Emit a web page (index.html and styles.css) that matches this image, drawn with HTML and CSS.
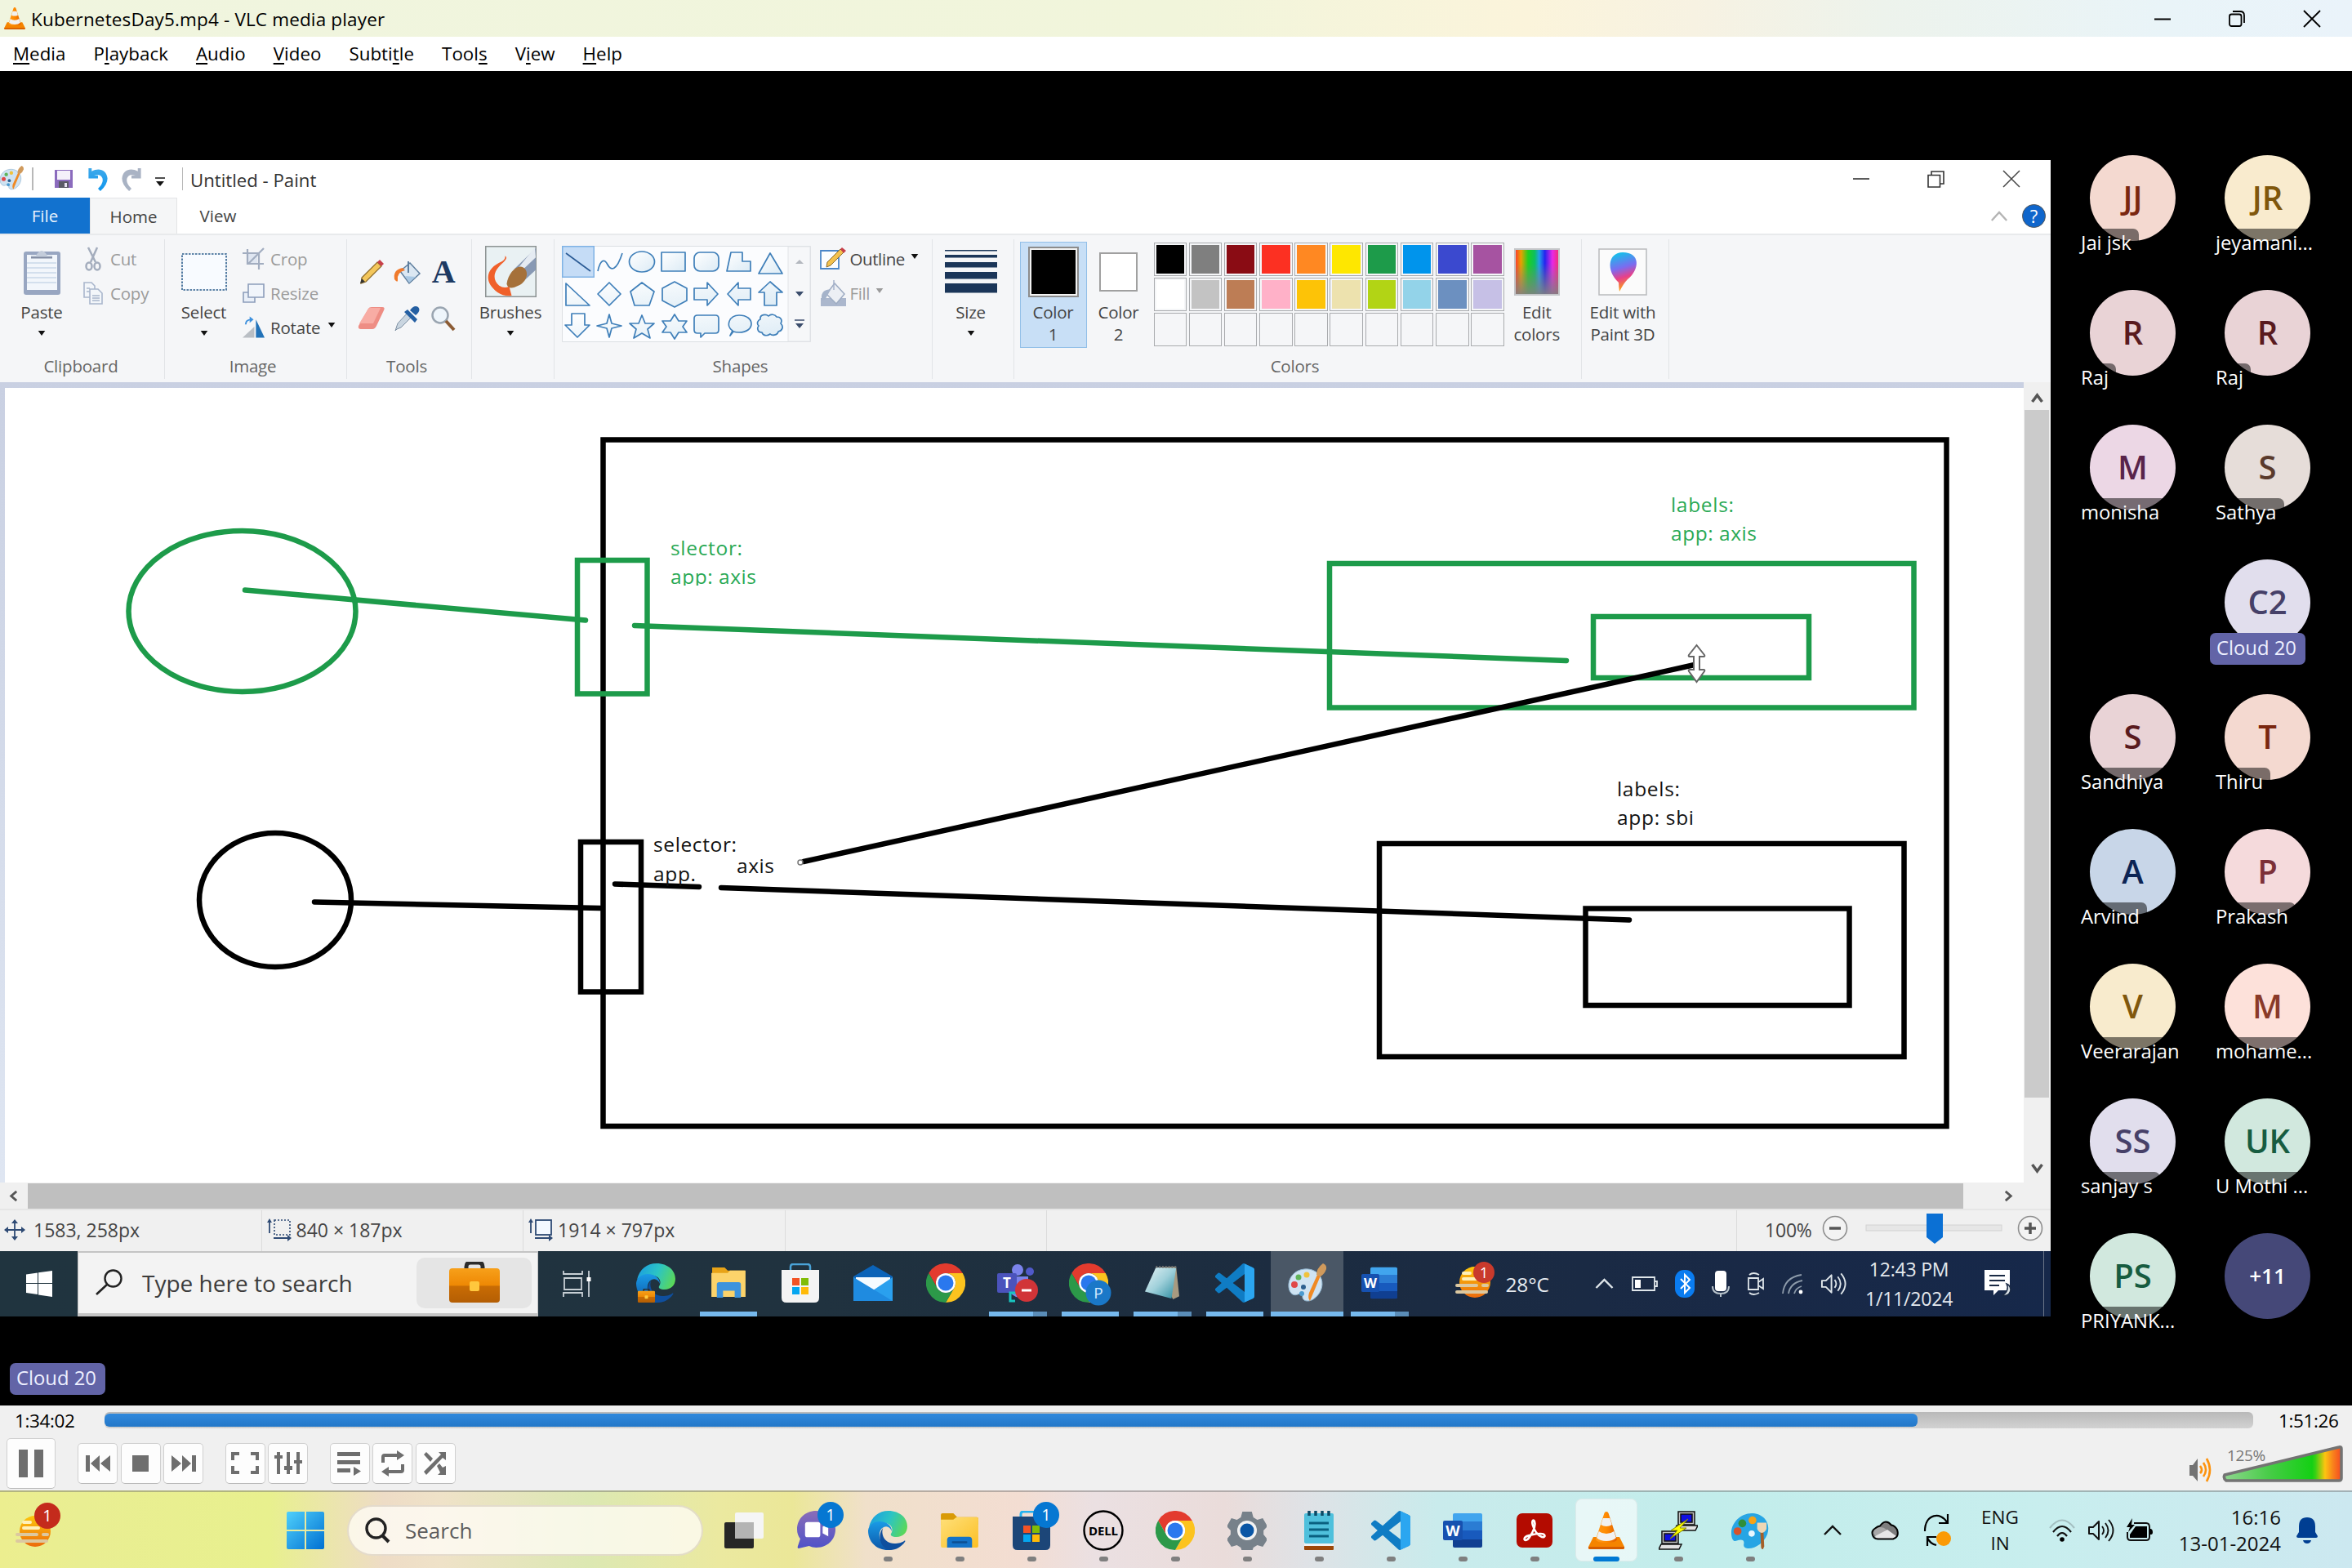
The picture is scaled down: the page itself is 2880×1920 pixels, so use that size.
FILE: index.html
```html
<!DOCTYPE html>
<html lang="en">
<head>
<meta charset="utf-8">
<title>KubernetesDay5.mp4 - VLC media player</title>
<link rel="stylesheet" href="styles.css">
</head>
<body>
<svg class="defs" width="0" height="0" aria-hidden="true">
<defs>
<linearGradient id="gPane" x1="0" y1="0" x2="1" y2="1"><stop offset="0" stop-color="#4fd0fb"/><stop offset="1" stop-color="#0070d2"/></linearGradient>
<linearGradient id="gEdgeA" x1="0" y1="0.3" x2="1" y2="0.6"><stop offset="0" stop-color="#1b9fe0"/><stop offset=".5" stop-color="#2cc4c4"/><stop offset="1" stop-color="#5bd858"/></linearGradient>
<linearGradient id="gEdgeB" x1="0" y1="0" x2="0" y2="1"><stop offset="0" stop-color="#1a9be6"/><stop offset="1" stop-color="#0c56a8"/></linearGradient>
<linearGradient id="gCone" x1="0" y1="0" x2="1" y2="0"><stop offset="0" stop-color="#ff9a1c"/><stop offset=".5" stop-color="#ff8a00"/><stop offset="1" stop-color="#e05e00"/></linearGradient>
<linearGradient id="gFolder" x1="0" y1="0" x2="1" y2="1"><stop offset="0" stop-color="#ffe07a"/><stop offset="1" stop-color="#fbbf24"/></linearGradient>
<linearGradient id="gShape" x1="0" y1="0" x2="1" y2="1"><stop offset="0" stop-color="#ffffff"/><stop offset="1" stop-color="#dcebf5"/></linearGradient>
<linearGradient id="gSun" x1="0" y1="0" x2="0" y2="1"><stop offset="0" stop-color="#fdc70c"/><stop offset="1" stop-color="#ec6a0c"/></linearGradient>
<linearGradient id="gChat" x1="0" y1="0" x2="0" y2="1"><stop offset="0" stop-color="#8a6db8"/><stop offset="1" stop-color="#4f52c8"/></linearGradient>
<linearGradient id="gCase" x1="0" y1="0" x2="0" y2="1"><stop offset="0" stop-color="#f7a01a"/><stop offset=".5" stop-color="#ee8804"/><stop offset=".52" stop-color="#c96c04"/><stop offset="1" stop-color="#b45e04"/></linearGradient>
<linearGradient id="gRain" x1="0" y1="0" x2="1" y2="0"><stop offset="0" stop-color="#f33"/><stop offset=".14" stop-color="#e8a000"/><stop offset=".3" stop-color="#1fd01f"/><stop offset=".45" stop-color="#0cbf60"/><stop offset=".55" stop-color="#22a0e8"/><stop offset=".68" stop-color="#2424ee"/><stop offset=".85" stop-color="#e828e8"/><stop offset="1" stop-color="#f2306c"/></linearGradient>
<linearGradient id="gFade" x1="0" y1="0" x2="0" y2="1"><stop offset="0" stop-color="#808080" stop-opacity="0"/><stop offset=".3" stop-color="#808080" stop-opacity="0"/><stop offset="1" stop-color="#808080" stop-opacity=".9"/></linearGradient>
<linearGradient id="g3d" x1=".3" y1="0" x2=".5" y2="1"><stop offset="0" stop-color="#10c4ea"/><stop offset=".4" stop-color="#7a6cf0"/><stop offset=".65" stop-color="#e8408a"/><stop offset="1" stop-color="#ffb400"/></linearGradient>
<linearGradient id="gVol" x1="0" y1="0" x2="1" y2="0"><stop offset="0" stop-color="#8fd68f"/><stop offset=".4" stop-color="#45cc45"/><stop offset=".75" stop-color="#14d014"/><stop offset=".78" stop-color="#3ad014"/><stop offset=".86" stop-color="#fdc510"/><stop offset=".93" stop-color="#f9801c"/><stop offset="1" stop-color="#f54a20"/></linearGradient>
<linearGradient id="gNote" x1="0" y1="0" x2="1" y2="1"><stop offset="0" stop-color="#e6f3f5"/><stop offset=".5" stop-color="#9fd0da"/><stop offset="1" stop-color="#2c8ca0"/></linearGradient>
<linearGradient id="gUndo" x1="0" y1="0" x2="0" y2="1"><stop offset="0" stop-color="#3fa9ea"/><stop offset="1" stop-color="#0f96ee"/></linearGradient>

<symbol id="cone" viewBox="0 0 48 48"><path d="M8 32h32l6 12q.6 3-2 3H4q-2.600 0-2-3z" fill="#f58400"/><path d="M2 44q-.5 3 2 3h40q2.500 0 2-3z" fill="#d65d00"/><path d="M24 1q2 0 2.600 2L37 35q-1 4-13 4t-13-4L21.400 3Q22 1 24 1z" fill="url(#gCone)"/><path d="M19.800 9h8.400l2.600 8q-3 2-6.800 2t-6.800-2zM14.700 25q4 3 9.300 3t9.300-3l2.600 8q-4 4-11.900 4t-11.900-4z" fill="#f1f1f1"/></symbol>
<symbol id="win11" viewBox="0 0 46 46"><path d="M2 0h20v22H0V2q0-2 2-2zM24 0h20q2 0 2 2v20H24zM0 24h22v22H2q-2 0-2-2zM24 24h22v20q0 2-2 2H24z" fill="url(#gPane)"/></symbol>
<symbol id="win10" viewBox="0 0 32 32"><path d="M0 4.500l14-2V15H0zM15 2.300L32 0v15H15zM0 16h14v13L0 27zM15 16h17v16l-17-2.400z" fill="#fff"/></symbol>
<symbol id="chrome" viewBox="0 0 48 48"><path d="M3.200 12A24 24 0 0 1 44.800 12H24A12 12 0 0 0 13.600 30z" fill="#e33b2e"/><path d="M44.800 12A24 24 0 0 1 24 48L34.400 30A12 12 0 0 0 24 12z" fill="#fcc31e"/><path d="M24 48A24 24 0 0 1 3.200 12L13.600 30A12 12 0 0 0 34.400 30z" fill="#2c9949"/><circle cx="24" cy="24" r="12" fill="#fff"/><circle cx="24" cy="24" r="9.500" fill="#2a78ee"/></symbol>
<symbol id="edge" viewBox="0 0 48 48"><path d="M1 20C4 7 13 0 25 0c14 0 23 9 23 19 0 8-6 13-13 13-6 0-8-2-7-4 3-4 2-11-6-13-9-2-17 1-21 5z" fill="url(#gEdgeA)"/><path d="M0 24C1 17 7 13 14 13c9 0 15 5 15 12-2-5-6-7-10-5-6 3-7 12-2 19 3 5 8 8 13 9C13 50 0 40 0 24z" fill="url(#gEdgeB)"/><path d="M19 20c-4 5-1 20 13 20 6 0 9-1 12-3 1-1 2 0 1 1-4 6-11 10-18 10-12-2-17-18-8-28z" fill="#0f4f9e"/></symbol>
<symbol id="vscode" viewBox="0 0 24 24"><path d="M23.150 2.587L18.210.21a1.494 1.494 0 0 0-1.705.29l-9.460 8.630-4.120-3.128a.999.999 0 0 0-1.276.057L.327 7.261A1 1 0 0 0 .326 8.740L3.899 12 .326 15.260a1 1 0 0 0 .001 1.479L1.650 17.940a.999.999 0 0 0 1.276.057l4.120-3.128 9.460 8.630a1.492 1.492 0 0 0 1.704.29l4.942-2.377A1.500 1.500 0 0 0 24 20.060V3.939a1.500 1.500 0 0 0-.85-1.352zm-5.146 14.861L10.826 12l7.178-5.448v10.896z" fill="#0f7cc4"/><path d="M18 .2l5.200 2.400q.8.500.8 1.400v16q0 1-.8 1.500L18 23.800z" fill="#2ba6f0"/></symbol>
<symbol id="word" viewBox="0 0 48 48"><path d="M14 3h32q2 0 2 2v8H12V5q0-2 2-2z" fill="#41a5ee"/><path d="M12 13h36v11H12z" fill="#2b7cd3"/><path d="M12 24h36v11H12z" fill="#185abd"/><path d="M12 35h36v8q0 2-2 2H14q-2 0-2-2z" fill="#103f91"/><rect x="0" y="12" width="24" height="24" rx="2" fill="#1651b0"/><text x="12" y="30.500" text-anchor="middle" font-size="18" font-weight="700" fill="#fff">W</text></symbol>
<symbol id="folder" viewBox="0 0 48 44"><path d="M2 0h14l5 5h25q2 0 2 2v8H0V2q0-2 2-2z" fill="#d99a06"/><path d="M20 5h26q2 0 2 2v35q0 2-2 2H2q-2 0-2-2V8h16z" fill="url(#gFolder)"/><path d="M12 30h24q4 0 4 4v10H8V34q0-4 4-4z" fill="#1473c8"/><rect x="14" y="36" width="20" height="2.500" rx="1.200" fill="#0b4f92"/></symbol>
<symbol id="folder10" viewBox="0 0 44 40"><path d="M1 0h16l4 4H43V14H1z" fill="#e8a317"/><path d="M1 7h20l3-3h20v34H0V7z" fill="#fcd36a"/><path d="M7 22q0-3 3-3h25q3 0 3 3v17H30V30H15v9H7z" fill="#3d93dd"/></symbol>
<symbol id="store" viewBox="0 0 46 48"><path d="M10 9V4q0-3 3-3h18q3 0 3 3v5" fill="none" stroke="#25b1f0" stroke-width="3"/><path d="M0 7h46v35q0 6-6 6H6q-6 0-6-6z" fill="#1c4678"/><g><path d="M13 18h9v9h-9z" fill="#f35325"/><path d="M24 18h9v9h-9z" fill="#81bc06"/><path d="M13 29h9v9h-9z" fill="#05a6f0"/><path d="M24 29h9v9h-9z" fill="#ffba08"/></g></symbol>
<symbol id="store10" viewBox="0 0 46 48"><path d="M11 9V4q0-3 3-3h18q3 0 3 3v5" fill="none" stroke="#4aa3d8" stroke-width="2.500"/><path d="M0 8h46v34q0 6-6 6H6q-6 0-6-6z" fill="#f4f4f4"/><path d="M13 18h9v9h-9z" fill="#f35325"/><path d="M24 18h9v9h-9z" fill="#81bc06"/><path d="M13 29h9v9h-9z" fill="#05a6f0"/><path d="M24 29h9v9h-9z" fill="#ffba08"/></symbol>
<symbol id="mail" viewBox="0 0 48 44"><path d="M0 14L24 0l24 14v8H0z" fill="#0b63b8"/><path d="M3 15h42v12L24 36 3 27z" fill="#f5fbff"/><path d="M0 15l24 16L48 15v29H0z" fill="#2aa0ee"/><path d="M0 15l48 29H0z" fill="#1f8be0"/></symbol>
<symbol id="palette" viewBox="0 0 48 48"><path d="M20 7C8 8 0 18 1 29c1 9 7 11 11 9 4-2 6 0 6 4 1 5 8 5 13 2 9-6 13-16 10-25C38 11 30 6 20 7z" fill="#cfe3f2" stroke="#8fb4cf"/><circle cx="8" cy="26" r="4" fill="#e04848"/><circle cx="13" cy="17" r="3.500" fill="#5fb45a"/><circle cx="23" cy="14" r="3.500" fill="#f0c23c"/><circle cx="19" cy="29" r="3" fill="#2c5f8f"/><circle cx="17" cy="37" r="3" fill="#4a9ad0"/><path d="M36 14l4 1-13 31q-3-4-1-10z" fill="#f08a24"/><path d="M35 14q0-8 8-14 5 2 4 7-2 6-7 9z" fill="#d09a5c"/></symbol>
<symbol id="paint11" viewBox="0 0 48 48"><path d="M26 2C12 2 0 14 0 27c0 8 3 12 7 10 6-2 10-1 9 4-1 4 2 6 6 6 10 0 20-8 24-18C51 13 40 2 26 2z" fill="#27a5e4"/><circle cx="8" cy="25" r="5" fill="#d8512b"/><circle cx="14" cy="15" r="5" fill="#2f8f3a"/><circle cx="27" cy="11" r="5" fill="#f5a318"/><circle cx="26" cy="28" r="4" fill="#e8f7ff"/><path d="M37 24h4l1 20q-2 7-4 2z" fill="#a4602a"/><path d="M33 14h12v8q-2 5-6 5t-6-5z" fill="#eed6b4"/></symbol>
<symbol id="teams" viewBox="0 0 50 48"><circle cx="25" cy="8" r="7" fill="#7b83eb"/><circle cx="40" cy="10" r="5" fill="#5059c9"/><path d="M14 16h24v20q-10 10-20 2z" fill="#7b83eb"/><rect x="0" y="12" width="24" height="24" rx="2" fill="#4b53bc"/><text x="12" y="30" text-anchor="middle" font-size="17" font-weight="700" fill="#fff">T</text><path d="M26 36H16v10h6" stroke="#19c5c0" stroke-width="3" fill="none"/><circle cx="36" cy="33" r="14" fill="#d13438"/><rect x="30" y="31.500" width="12" height="3" fill="#fff"/></symbol>
<symbol id="notepad10" viewBox="0 0 44 44"><path d="M14 2l26-1 4 38-8 4z" fill="#a89a80"/><path d="M14 2l26 1-6 39L0 33z" fill="url(#gNote)"/><path d="M14 1h26" stroke="#6b6b6b" stroke-width="3" stroke-dasharray="2 2"/></symbol>
<symbol id="case" viewBox="0 0 62 50"><path d="M21 10V6q0-5 5-5h10q5 0 5 5v4" fill="none" stroke="#2c2c2c" stroke-width="5"/><rect y="8" width="62" height="42" rx="4" fill="url(#gCase)"/><rect x="25" y="24" width="12" height="12" rx="2" fill="#ffc83d"/></symbol>
<symbol id="weather" viewBox="0 0 44 42"><circle cx="24" cy="22" r="19" fill="url(#gSun)"/><g stroke="#fff0b8" stroke-width="4" stroke-linecap="round"><path d="M10 11h8M10 18h18"/><path stroke="#dcc8a0" d="M2 26h24M34 26h5M2 34h36"/></g></symbol>
<symbol id="chat" viewBox="0 0 48 48"><path d="M24 0c14 0 24 10 24 23S38 46 24 46q-5 0-9-2L2 47q-2 0-1-3l3-9Q0 30 0 23C0 10 10 0 24 0z" fill="url(#gChat)"/><rect x="10" y="14" width="19" height="19" rx="3" fill="#fff"/><path d="M32 20l7-5v17l-7-4z" fill="#fff"/></symbol>
<symbol id="gear" viewBox="0 0 48 48"><path d="M18 1h12l2 7 5 3 7-2 6 10-5 5v5l5 6-6 9-7-2-5 3-2 6H18l-2-6-5-3-7 2-6-9 5-6v-5l-5-5L4 9l7 2 5-3z" transform="translate(1 0) scale(.96 1)" fill="#77818a"/><circle cx="24" cy="24" r="12" fill="#f2f2f2"/><circle cx="24" cy="24" r="8.500" fill="#0a56a5"/></symbol>
<symbol id="notes11" viewBox="0 0 36 48"><rect y="42" width="36" height="6" rx="1" fill="#9c4708"/><rect y="38" width="36" height="5" fill="#f2f2f2"/><rect y="3" width="36" height="37" rx="2" fill="#4fc0dc"/><path d="M6 0v6M14 0v6M22 0v6M30 0v6" stroke="#0b4a66" stroke-width="3.500"/><path d="M6 15h24M6 23h24M6 31h24" stroke="#0a6080" stroke-width="3"/></symbol>
<symbol id="acrobat" viewBox="0 0 44 42"><rect width="44" height="42" rx="7" fill="#b30b00"/><path d="M10 30c-2 4 3 4 6-1 4-6 8-14 6-19-1-3-4-1-2 5 2 7 6 12 11 14 5 1 5-4-2-4-6 0-17 2-19 5z" fill="none" stroke="#fff" stroke-width="2.600"/></symbol>
<symbol id="putty" viewBox="0 0 48 48"><g stroke="#111" stroke-width="1.500"><path d="M24 1h20v16H24z" fill="#c4c4c4"/><path d="M27 4h14v10H27z" fill="#1010e0"/><path d="M22 18h26l-3 6H20z" fill="#e2e2e2"/><path d="M4 25h20v15H4z" fill="#c4c4c4"/><path d="M7 28h14v9H7z" fill="#1010e0"/><path d="M3 41h25l-3 6H0z" fill="#e2e2e2"/></g><path d="M36 10L15 24h8l-9 10 20-13h-8z" fill="#ff0" stroke="#8a8a00"/></symbol>
<symbol id="tview" viewBox="0 0 48 44"><rect x="0" y="12" width="36" height="32" rx="2" fill="#262626"/><rect x="13" y="0" width="35" height="32" rx="2" fill="#f5f5f5"/><rect x="13" y="12" width="23" height="20" fill="#b4b4b4"/></symbol>
<symbol id="lens" viewBox="0 0 32 32"><circle cx="14.500" cy="13.500" r="11.500" fill="none" stroke="currentColor" stroke-width="3.400"/><path d="M22 22l8 8" stroke="currentColor" stroke-width="4"/></symbol>
<symbol id="volume" viewBox="0 0 34 28"><path d="M2 10h5l7-7v22l-7-7H2z" fill="none" stroke="currentColor" stroke-width="2" stroke-linejoin="round"/><path d="M18 9q4 5 0 10M22 5q7 9 0 18M26 1q11 13 0 26" fill="none" stroke="currentColor" stroke-width="1.900"/></symbol>
<symbol id="caret" viewBox="0 0 10 7"><path d="M0 0h10L5 7z" fill="currentColor"/></symbol>
<symbol id="chevUp" viewBox="0 0 24 14"><path d="M2 12L12 2l10 10" fill="none" stroke="currentColor" stroke-width="2.400"/></symbol>
<symbol id="brush" viewBox="0 0 62 62"><rect x=".75" y=".75" width="60.500" height="60.500" fill="#e9f1f3" stroke="#8e9494" stroke-width="1.500"/><path d="M61 3v26L47 42 35 28z" fill="#8899b4"/><path d="M60 2L38 29l4 3L61 14z" fill="#e5ebf2"/><path d="M26 46c2-13 12-24 20-20 8 5 4 18-6 22-6 3-12 5-14-2z" fill="#a5713a"/><path d="M24 12q4 2-2 8C10 30 8 40 17 48q6 4 12 1l3 11q-10 1-17-4C-4 42 3 26 20 19q5-3 4-7z" fill="#f0602a"/></symbol>
</defs>
</svg>

<header class="titlebar">
  <svg class="cone-sm"><use href="#cone"/></svg>
  <span class="window-title">KubernetesDay5.mp4 - VLC media player</span>
  <div class="caption">
    <svg width="20" height="20" viewBox="0 0 20 20"><path d="M0 10.500h20" stroke="#000" stroke-width="2"/></svg>
    <svg width="20" height="20" viewBox="0 0 20 20"><rect x="1" y="4.500" width="14.500" height="14.500" rx="2.500" fill="none" stroke="#000" stroke-width="1.800"/><path d="M5 1h9q5 0 5 5v9" fill="none" stroke="#000" stroke-width="1.800"/></svg>
    <svg width="22" height="22" viewBox="0 0 22 22"><path d="M1 1l20 20M21 1L1 21" stroke="#000" stroke-width="1.800"/></svg>
  </div>
</header>
<nav class="menubar">
  <span><u>M</u>edia</span><span>P<u>l</u>ayback</span><span><u>A</u>udio</span><span><u>V</u>ideo</span><span>Subti<u>t</u>le</span><span>Tool<u>s</u></span><span>V<u>i</u>ew</span><span><u>H</u>elp</span>
</nav>

<main class="stage">
<div class="shared">
<section class="paint">
  <div class="p-title">
    <svg class="p-logo"><use href="#palette"/></svg>
    <i class="vr"></i>
    <svg class="p-save" viewBox="0 0 22 22"><path d="M0 0h22v22H0z" fill="#8b6bbd"/><path d="M3 1h16v11H3z" fill="#f4f1fa"/><path d="M5 14h12v8H5z" fill="#5a5a66"/><path d="M12 16h3v5h-3z" fill="#e6e0f0"/></svg>
    <svg class="p-undo" viewBox="0 0 26 30"><path d="M1 1v13h12V10H8q10-3 11 6 0 5-6 11l3 3q9-8 9-16C24 3 14 0 5 5V1z" fill="url(#gUndo)"/></svg>
    <svg class="p-redo" viewBox="0 0 26 30"><path d="M25 1v13H13V10h5q-10-3-11 6 0 5 6 11l-3 3q-9-8-9-16C2 3 12 0 21 5V1z" fill="#a9b3c4"/></svg>
    <svg class="p-drop" viewBox="0 0 12 12"><path d="M0 1h12" stroke="#222" stroke-width="1.600"/><path d="M1 5h10l-5 6z" fill="#111"/></svg>
    <i class="vr vr2"></i>
    <span class="p-name">Untitled - Paint</span>
    <div class="p-caption">
      <svg width="20" height="22" viewBox="0 0 20 22"><path d="M0 11h20" stroke="#333" stroke-width="1.600"/></svg>
      <svg width="21" height="21" viewBox="0 0 21 21"><path d="M1 5.500h14.500V20H1zM5 5V1h15v15h-4" fill="none" stroke="#333" stroke-width="1.600"/></svg>
      <svg width="22" height="22" viewBox="0 0 22 22"><path d="M1 1l20 20M21 1L1 21" stroke="#444" stroke-width="1.500"/></svg>
    </div>
  </div>
  <div class="p-tabs">
    <span class="tab file">File</span><span class="tab home">Home</span><span class="tab view">View</span>
    <svg class="p-collapse" viewBox="0 0 24 14"><path d="M2 13L12 2l10 11" fill="none" stroke="#b4b4b4" stroke-width="2.600"/></svg>
    <b class="help">?</b>
  </div>
  <div class="ribbon">
    <div class="group g-clip">
      <div class="gbody">
        <div class="big"><span class="pic"><svg width="46" height="56" viewBox="0 0 46 56"><rect x="1" y="3" width="45" height="53" rx="3" fill="#98a6c1"/><rect x="5" y="7" width="37" height="43" fill="#f2f6fb"/><path d="M5 17h36M5 23h36M5 29h36M5 35h36M5 41h36" stroke="#c9d7e9" stroke-width="1.500"/><path d="M10 10.500V8h6l2-3q5-6 10 0l2 3h6v2.500z" fill="#c3ccda"/><path d="M10 10.500h26" stroke="#7f8aa0" stroke-width="2"/></svg></span><span>Paste</span><svg class="caret"><use href="#caret"/></svg></div>
        <div class="rows off"><div><svg width="24" height="30" viewBox="0 0 24 30"><path d="M6 1l9 18M17 1L9 19" stroke="#a4adbd" stroke-width="2.500"/><ellipse cx="7" cy="24" rx="3.500" ry="4.500" fill="none" stroke="#a4adbd" stroke-width="2.500"/><ellipse cx="17" cy="24" rx="3.500" ry="4.500" fill="none" stroke="#a4adbd" stroke-width="2.500"/></svg>Cut</div>
        <div><svg width="24" height="28" viewBox="0 0 24 28"><path d="M1 1h9l4 4v14H1z" fill="#f3f6fa" stroke="#a9b6cc" stroke-width="1.600"/><path d="M8 9h10l5 5v13H8z" fill="#f3f6fa" stroke="#a9b6cc" stroke-width="1.600"/><path d="M4 8h4M4 12h4M11 17h9M11 20h9M11 23h9" stroke="#a9b6cc" stroke-width="1.500"/></svg>Copy</div></div>
      </div>
      <div class="glabel">Clipboard</div>
    </div>
    <div class="group g-image">
      <div class="gbody">
        <div class="big"><span class="pic"><svg width="56" height="46" viewBox="0 0 56 46"><rect x="1" y="1" width="54" height="44" fill="#f8fbff" stroke="#2b5d8c" stroke-width="1.600" stroke-dasharray="2.500 1.500"/></svg></span><span>Select</span><svg class="caret"><use href="#caret"/></svg></div>
        <div class="rows"><div class="off"><svg width="27" height="26" viewBox="0 0 27 26"><path d="M7 7h11v12H7z" fill="#dfe6f1"/><path d="M0 6h20v20M6 1v18h20M7 19L26 0" fill="none" stroke="#a2adc0" stroke-width="2.200"/></svg>Crop</div>
        <div class="off"><svg width="27" height="26" viewBox="0 0 27 26"><path d="M1 12h14v12H1z" fill="#e9eff8" stroke="#8c9dba" stroke-width="1.600"/><path d="M7 2h19v16H7z" fill="#f1f5fb" stroke="#8c9dba" stroke-width="1.600"/></svg>Resize</div>
        <div><svg width="27" height="26" viewBox="0 0 28 26"><path d="M17 3v23h11z" fill="#2272b8"/><path d="M15 12v14H0z" fill="#b9bec4"/><path d="M4 9q0-6 7-6" fill="none" stroke="#3d90dd" stroke-width="2"/><path d="M9-1l5 4-5 4z" fill="#3d90dd"/></svg>Rotate<svg class="caret"><use href="#caret"/></svg></div></div>
      </div>
      <div class="glabel">Image</div>
    </div>
    <div class="group g-tools">
      <div class="gbody toolgrid">
        <svg width="30" height="30" viewBox="0 0 30 30"><path d="M3 22L22 3l5 5L8 27l-6 2z" fill="#f3c65b" stroke="#8b6a2a" stroke-width="1.200"/><path d="M22 3l3-3 5 5-3 3z" fill="#c8404a"/><path d="M3 23l-2 6 6-2z" fill="#333"/></svg>
        <svg width="34" height="30" viewBox="0 0 34 30"><path d="M8 14L20 4l12 13-13 12z" fill="#dbe7f2" stroke="#5f7f9f" stroke-width="1.500"/><path d="M18 16V2" stroke="#5f7f9f" stroke-width="2"/><path d="M1 24q-2-12 10-14l3 3q-10 2-9 12 0 4-4-1z" fill="#f07a2c"/><path d="M14 20l13 1-8 7z" fill="#a9c8e4"/></svg>
        <b class="serifA">A</b>
        <svg width="34" height="28" viewBox="0 0 34 28"><path d="M13 2q1-2 4-2h13q4 0 2 4l-9 19q-2 4-5 4H4q-4 0-3-4z" fill="#ee8d84"/><path d="M13 2L2 20h17l9-19H16q-2 0-3 1z" fill="#f8aca4"/></svg>
        <svg width="32" height="30" viewBox="0 0 32 30"><path d="M3 28L1 30l3-9L16 8l5 5L8 26z" fill="#c9d5e0" stroke="#7e90a3"/><path d="M12 7l4-3 12 12-3 4zM19 5q5-7 10-4 4 4-3 10z" fill="#245fa2"/></svg>
        <svg width="30" height="30" viewBox="0 0 30 30"><circle cx="11" cy="11" r="9.500" fill="#eef5fb" stroke="#9aa5b1" stroke-width="2.500"/><path d="M18 18l10 11" stroke="#8b5b34" stroke-width="4"/></svg>
      </div>
      <div class="glabel">Tools</div>
    </div>
    <div class="group g-brush">
      <div class="gbody"><div class="big"><span class="pic"><svg width="63" height="63"><use href="#brush"/></svg></span><span>Brushes</span><svg class="caret"><use href="#caret"/></svg></div></div>
    </div>
    <div class="group g-shapes">
      <div class="gbody">
        <svg class="gallery" width="305" height="118" viewBox="0 0 305 118">
          <path d="M.5.500h304v117H.5z" fill="#fbfcfe" stroke="#dcdfe3"/><path d="M277 1h27v116h-27z" fill="#f6f7f9" stroke="#e1e4e8"/>
          <rect x=".75" y=".75" width="38.500" height="37.500" fill="#c5dcf6" stroke="#7fb2e5" stroke-width="1.500"/>
          <path d="M5 9l30 22" stroke="#2a5a94" stroke-width="1.600"/>
          <g fill="url(#gShape)" stroke="#3f7fb9" stroke-width="1.700" stroke-linejoin="round">
            <path fill="none" d="M44 31c3-14 8-16 12-8s11 8 18-14"/><ellipse cx="98" cy="19.500" rx="15.500" ry="12.500"/><path d="M122 8h29v23h-29z"/><rect x="162" y="8" width="30" height="23" rx="7"/><path d="M207 8h14v11h10v12h-29z"/><path d="M255 9l15 25h-29z"/>
            <path d="M5 46v27h29zM58 45l14 14-14 14-14-14zM98 45l15 11-6 17H89l-5-17zM138 44l15 8v15l-15 8-15-8V52zM162 52h16v-7l13 14-13 14v-7h-16zM231 52h-15v-7l-13 14 13 14v-7h15zM255 44l15 13h-7v16h-15V57h-7z"/>
            <path d="M12 83h16v14h6l-15 15L4 97h8zM58 84l3 11 12 3-12 3-3 11-3-11-12-3 12-3zM98 85l4 10h11l-8 7 3 11-10-6-10 6 3-11-8-7h11zM138 84l5 8h10l-5 7 5 7h-10l-5 8-5-8h-10l5-7-5-7h10zM166 85h22q4 0 4 4v14q0 4-4 4h-13l-5 5v-5h-4q-4 0-4-4V89q0-4 4-4zM206 110l3-6c-9-6-4-19 8-19 20 0 20 21 0 21q-4 0-7-1zM243 90c-1-6 7-7 10-4 3-3 8-2 10 1 6 0 7 5 5 8 4 4 2 9-3 10-1 5-8 5-10 3-4 3-9 2-10-2-6 0-6-6-4-8-3-3-1-7 2-8z"/>
          </g>
          <path d="M286 22l5-5 5 5z" fill="#b4b8bf"/><path d="M286 56l5 6 5-6zM286 95l5 6 5-6z" fill="#3b4d6c"/><path d="M285 91h12" stroke="#3b4d6c" stroke-width="1.500"/>
        </svg>
        <div class="rows r-fill"><div><svg width="32" height="28" viewBox="0 0 32 28"><path d="M1 4h22v22H1z" fill="#fbfdff" stroke="#4a86c8" stroke-width="1.800"/><path d="M9 18L25 2l4 4-16 16-5 2z" fill="#f2c14e" stroke="#8b6a2a"/><path d="M25 2l2-2 5 4-3 3z" fill="#c8404a"/></svg>Outline<svg class="caret"><use href="#caret"/></svg></div>
        <div class="off"><svg width="32" height="32" viewBox="0 0 32 32"><path d="M1 22h31v10H1z" fill="#abb7cd"/><path d="M8 17L18 4l12 13-10 12z" fill="#eceff4" stroke="#9dabc2" stroke-width="1.500"/><path d="M3 24q-2-11 9-12l-6 11zM17 0v12" fill="#a5b3ca" stroke="#a5b3ca" stroke-width="1.500"/></svg>Fill<svg class="caret"><use href="#caret"/></svg></div></div>
      </div>
      <div class="glabel">Shapes</div>
    </div>
    <div class="group g-size">
      <div class="gbody"><div class="big"><span class="pic"><svg width="64" height="54" viewBox="0 0 64 54"><path d="M0 0h64v1.500H0zM0 6h64v3.500H0zM0 15h64v6.500H0zM0 27h64v8.500H0zM0 41h64v11.500H0z" fill="#1b3659"/></svg></span><span>Size</span><svg class="caret"><use href="#caret"/></svg></div></div>
    </div>
    <div class="group g-colors">
      <div class="gbody">
        <div class="big sel"><span class="pic"><i class="sw1"></i></span><span>Color</span><span>1</span></div>
        <div class="big c2"><span class="pic"><i class="sw2"></i></span><span>Color</span><span>2</span></div>
        <div class="swatches">
          <i style="background:#000"></i><i style="background:#7f7f7f"></i><i style="background:#8a0c14"></i><i style="background:#fc3022"></i><i style="background:#ff8822"></i><i style="background:#fee700"></i><i style="background:#1d9b4a"></i><i style="background:#0094ec"></i><i style="background:#3b49cf"></i><i style="background:#a653a1"></i>
          <i style="background:#fff"></i><i style="background:#c3c3c3"></i><i style="background:#bd7d55"></i><i style="background:#ffb1c8"></i><i style="background:#fdc307"></i><i style="background:#ede2ae"></i><i style="background:#b2d415"></i><i style="background:#93d3e9"></i><i style="background:#6c90c0"></i><i style="background:#c6c0e6"></i>
          <i></i><i></i><i></i><i></i><i></i><i></i><i></i><i></i><i></i><i></i>
        </div>
        <div class="big ec"><span class="pic"><svg width="56" height="58" viewBox="0 0 56 58"><rect x="1" y="1" width="54" height="56" fill="url(#gRain)" stroke="#c4c6c9" stroke-width="2"/><rect x="2" y="2" width="52" height="54" fill="url(#gFade)"/></svg></span><span>Edit</span><span>colors</span></div>
      </div>
      <div class="glabel">Colors</div>
    </div>
    <div class="group g-3d">
      <div class="gbody"><div class="big"><span class="pic"><svg width="60" height="58" viewBox="0 0 60 58"><rect x="1" y="1" width="58" height="56" fill="#fbfbfb" stroke="#b9bbbd" stroke-width="1.500"/><path d="M30 5c22 0 21 21 6 33q-5 5-10 15-1-6-1-11C9 27 12 5 30 5z" fill="url(#g3d)"/></svg></span><span>Edit with</span><span>Paint 3D</span></div></div>
    </div>
  </div>
  <div class="workspace">
    <div class="canvas-wrap">
      <svg class="canvas" width="2472" height="973" viewBox="6 475 2472 973">
        <g fill="none" stroke-width="6.500">
          <rect x="738.500" y="538.500" width="1645" height="840.500" stroke="#000"/>
          <g stroke="#1d9b4a">
            <ellipse cx="296.500" cy="748.500" rx="139" ry="98.500"/>
            <path d="M300 722.500L717 759.500M777 766l1141 43" stroke-linecap="round"/>
            <rect x="707" y="686" width="85.500" height="163.500"/>
            <rect x="1628" y="690" width="715.500" height="176.500"/>
            <rect x="1951" y="755" width="264" height="75"/>
          </g>
          <g stroke="#000">
            <ellipse cx="337" cy="1102" rx="93" ry="82"/>
            <path d="M385 1104.500L735 1112M753 1082.500l103 3.500M883 1087L1995 1126.500M984 1055L2075 814" stroke-linecap="round"/>
            <rect x="711" y="1031" width="74" height="183.500"/>
            <rect x="1689" y="1033" width="642.500" height="261"/>
            <rect x="1941.500" y="1112.500" width="323" height="118.500"/>
          </g>
          <circle cx="980" cy="1056" r="3" fill="#fff" stroke="#777" stroke-width="1.500"/>
          <path d="M2077.500 790l9.500 12q1 2-1 2h-5v16h5q2 0 1 2l-9.500 13-9.500-13q-1-2 1-2h5v-16h-5q-2 0-1-2z" fill="#fff" stroke="#666" stroke-width="2"/>
        </g>
        <clipPath id="cut"><path d="M800 640h200v77H800z"/></clipPath>
        <g class="ink green">
          <text x="821" y="680" textLength="88">slector:</text>
          <text x="821" y="715" textLength="105" clip-path="url(#cut)">app: axis</text>
          <text x="2046" y="627" textLength="77">labels:</text>
          <text x="2046" y="662" textLength="105">app: axis</text>
        </g>
        <g class="ink">
          <text x="800" y="1043" textLength="102">selector:</text>
          <text x="800" y="1079" textLength="52">app.</text>
          <text x="902" y="1069" textLength="46">axis</text>
          <text x="1980" y="975" textLength="77">labels:</text>
          <text x="1980" y="1010" textLength="94">app: sbi</text>
        </g>
      </svg>
    </div>
    <div class="vscroll"><svg viewBox="0 0 16 14"><path d="M2 11l6-8 6 8" fill="none" stroke="#555" stroke-width="3.500"/></svg><i></i><svg class="end" viewBox="0 0 16 14"><path d="M2 3l6 8 6-8" fill="none" stroke="#555" stroke-width="3.500"/></svg></div>
  </div>
  <div class="hscroll"><svg viewBox="0 0 14 16"><path d="M11 2L4 8l7 6" fill="none" stroke="#555" stroke-width="3"/></svg><i></i><svg class="right" viewBox="0 0 14 16"><path d="M3 2l7 6-7 6" fill="none" stroke="#555" stroke-width="3"/></svg></div>
  <div class="status">
    <div class="cell c1"><svg width="26" height="26" viewBox="0 0 26 26"><path d="M13 1v24M1 13h24" stroke="#2e4a74" stroke-width="1.800"/><path d="M13 0l4 5H9zM13 26l4-5H9zM0 13l5-4v8zM26 13l-5-4v8z" fill="#2e4a74"/></svg>1583, 258px</div>
    <div class="cell"><svg width="30" height="28" viewBox="0 0 30 28"><rect x="9" y="2" width="19" height="18" fill="none" stroke="#2e4a74" stroke-width="1.600" stroke-dasharray="2 2"/><path d="M3 4v14M8 24h18" stroke="#2e4a74" stroke-width="1.800"/><path d="M3 0l3 5H0zM30 24l-5-4v8z" fill="#2e4a74"/></svg>840 × 187px</div>
    <div class="cell"><svg width="30" height="28" viewBox="0 0 30 28"><rect x="9" y="2" width="19" height="18" fill="#f3f8ff" stroke="#2e4a74" stroke-width="1.800"/><path d="M3 4v14M8 24h18" stroke="#2e4a74" stroke-width="1.800"/><path d="M3 0l3 5H0zM30 24l-5-4v8z" fill="#2e4a74"/></svg>1914 × 797px</div>
    <div class="cell"></div>
    <div class="cell wide"></div>
    <div class="cell zoom"><span>100%</span>
      <svg width="320" height="44" viewBox="0 0 320 44"><g stroke="#8e8e8e" stroke-width="1.600" fill="#f3f3f3"><circle cx="22" cy="20" r="14.500"/><circle cx="261" cy="20" r="14.500"/></g><path d="M15 20h14M254 20h14M261 13v14" stroke="#555" stroke-width="3.500"/><rect x="60" y="16" width="166" height="7" fill="#e6e6e6" stroke="#d2d2d2"/><path d="M134 2h20v29l-10 8-10-8z" fill="#0b70d4"/></svg>
    </div>
  </div>
  <div class="tb10">
    <div class="start"><svg width="32" height="32"><use href="#win10"/></svg></div>
    <div class="search10"><svg width="34" height="32" viewBox="0 0 34 32"><circle cx="21.500" cy="11.500" r="10" fill="none" stroke="#222" stroke-width="2.400"/><path d="M14.500 18.500L1 31" stroke="#222" stroke-width="2.600"/></svg><span>Type here to search</span><div class="hl"><svg width="62" height="50"><use href="#case"/></svg></div></div>
    <div class="tv"><svg width="34" height="32" viewBox="0 0 34 32"><path d="M2 9h21v14H2zM1 0v4h23V0M1 32v-5h23v5M32 0v32" fill="none" stroke="#c7cfd4" stroke-width="1.800"/><path d="M29.500 8h5v5h-5z" fill="#fff"/></svg></div>
    <div class="app"><svg width="48" height="48"><use href="#edge"/><use href="#case" x="0" y="31" width="25" height="17"/></svg></div>
    <div class="app run"><svg width="44" height="38"><use href="#folder10"/></svg></div>
    <div class="app"><svg width="46" height="48"><use href="#store10"/></svg></div>
    <div class="app"><svg width="48" height="44"><use href="#mail"/></svg></div>
    <div class="app"><svg width="48" height="48"><use href="#chrome"/></svg></div>
    <div class="app run multi"><svg width="50" height="48"><use href="#teams"/></svg></div>
    <div class="app run"><svg class="badgeP" width="52" height="52"><use href="#chrome" width="48" height="48"/><circle cx="36" cy="36" r="15.500" fill="#1a78c8"/><text x="36" y="43" font-size="19" text-anchor="middle" fill="#d8ecff">P</text></svg></div>
    <div class="app run multi"><svg width="42" height="42"><use href="#notepad10"/></svg></div>
    <div class="app run"><svg width="48" height="48"><use href="#vscode"/></svg></div>
    <div class="app run on"><svg width="48" height="48"><use href="#palette"/></svg></div>
    <div class="app run multi"><svg width="48" height="44"><use href="#word"/></svg></div>
    <div class="wx"><svg width="48" height="46" viewBox="0 0 48 46"><use href="#weather" x="0" y="3" width="44" height="42"/><circle cx="35" cy="13" r="13" fill="#c93a2c"/><text x="35" y="20" font-size="18" text-anchor="middle" fill="#fff">1</text></svg><span>28°C</span></div>
    <div class="tray10">
      <svg width="25" height="14" color="#dfe6ea"><use href="#chevUp"/></svg>
      <svg width="32" height="18" viewBox="0 0 32 18"><path d="M1 1h27v16H1zM28 6h3v6h-3" fill="none" stroke="#dfe6ea" stroke-width="1.800"/><path d="M4 4h7v10H4z" fill="#fff"/></svg>
      <svg width="24" height="34" viewBox="0 0 24 34"><rect width="24" height="34" rx="11" fill="#0a7cf0"/><path d="M7 11l11 11-6 6V6l6 6L7 23" fill="none" stroke="#fff" stroke-width="2"/></svg>
      <svg width="22" height="34" viewBox="0 0 22 34"><rect x="4" y="1" width="14" height="25" rx="4" fill="#fff"/><path d="M1 20q0 9 10 9t10-9M11 29v4" fill="none" stroke="#b9c4cc" stroke-width="2"/></svg>
      <svg width="22" height="32" viewBox="0 0 22 32"><path d="M2 9h12v14H2zM14 14l6-4v12l-6-4M3 5q5-4 12 0M3 27q5 4 12 0" fill="none" stroke="#dfe6ea" stroke-width="1.800"/></svg>
      <svg width="26" height="26" viewBox="0 0 26 26"><path d="M1 25Q3 5 24 2M8 25Q10 12 25 9M15 25q2-7 9-9" fill="none" stroke="#8e9cab" stroke-width="1.800"/><circle cx="23" cy="23" r="2.400" fill="#fff"/></svg>
      <svg width="33" height="28" color="#dfe6ea"><use href="#volume"/></svg>
    </div>
    <div class="clock10"><span>12:43 PM</span><span>1/11/2024</span></div>
    <svg class="notif" width="34" height="34" viewBox="0 0 34 34"><path d="M0 0h31v25H17l-6 6v-6H0z" fill="#fff"/><path d="M6 7h19M6 13h19M6 19h12" stroke="#1a2a44" stroke-width="2"/><path d="M22 31a7 7 0 0 0 5-14 10 10 0 0 1-5 14z" fill="#dfe6ea" stroke="#1a2a44" stroke-width="1.500"/></svg>
    <i class="peek"></i>
  </div>
</section>
<span class="tag speaking presenter">Cloud 20</span>
</div>
<aside class="people">
  <div class="p"><b style="background:#f4d9d0;color:#7a2710">JJ</b><span class="tag">Jai jsk</span></div>
  <div class="p"><b style="background:#f9ebce;color:#80570c">JR</b><span class="tag">jeyamani...</span></div>
  <div class="p"><b style="background:#e9d3d6;color:#591a1e">R</b><span class="tag">Raj</span></div>
  <div class="p"><b style="background:#e9d3d6;color:#591a1e">R</b><span class="tag">Raj</span></div>
  <div class="p"><b style="background:#ecd7e5;color:#58244a">M</b><span class="tag">monisha</span></div>
  <div class="p"><b style="background:#e6ddd9;color:#5a3a2c">S</b><span class="tag">Sathya</span></div>
  <div class="p none"></div>
  <div class="p"><b style="background:#e1deed;color:#464068">C2</b><span class="tag speaking">Cloud 20</span></div>
  <div class="p"><b style="background:#e9d3d6;color:#591a1e">S</b><span class="tag">Sandhiya</span></div>
  <div class="p"><b style="background:#f4d9d0;color:#7a2710">T</b><span class="tag">Thiru</span></div>
  <div class="p"><b style="background:#c8d6e8;color:#0c2454">A</b><span class="tag">Arvind</span></div>
  <div class="p"><b style="background:#f5dadc;color:#7c3038">P</b><span class="tag">Prakash</span></div>
  <div class="p"><b style="background:#f8ebcd;color:#80570c">V</b><span class="tag">Veerarajan</span></div>
  <div class="p"><b style="background:#fde1da;color:#8a3a28">M</b><span class="tag">mohame...</span></div>
  <div class="p"><b style="background:#e1deed;color:#464068">SS</b><span class="tag">sanjay s</span></div>
  <div class="p"><b style="background:#d1e8de;color:#175c40">UK</b><span class="tag">U Mothi ...</span></div>
  <div class="p"><b style="background:#d1e8de;color:#175c40">PS</b><span class="tag">PRIYANK...</span></div>
  <div class="p more"><b>+11</b></div>
</aside>
</main>

<section class="controls">
  <div class="seek"><time>1:34:02</time><div class="track"><i></i></div><time class="total">1:51:26</time></div>
  <div class="buttons">
    <button class="play"><svg width="32" height="36" viewBox="0 0 32 36"><path d="M1 1h11v34H1zM20 1h11v34H20z"/></svg></button>
    <div class="set">
      <button><svg width="30" height="20" viewBox="0 0 30 20"><path d="M0 0h5v20H0zM17 0v20L6 10zM30 0v20L18 10z"/></svg></button>
      <button><svg width="20" height="20" viewBox="0 0 20 20"><path d="M0 0h20v20H0z"/></svg></button>
      <button><svg width="30" height="20" viewBox="0 0 30 20"><path d="M30 0h-5v20h5zM13 0v20l11-10zM0 0v20l12-10z"/></svg></button>
    </div>
    <div class="set">
      <button><svg width="34" height="27" viewBox="0 0 34 27"><path d="M0 0h10v4H4v6H0zM34 0H24v4h6v6h4zM0 27h10v-4H4v-6H0zM34 27H24v-4h6v-6h4z"/></svg></button>
      <button><svg width="34" height="27" viewBox="0 0 34 27"><path d="M3 0h4v27H3zM15 0h4v27h-4zM27 0h4v27h-4zM0 4h10v4H0zM12 17h10v5H12zM24 10h10v4H24z"/></svg></button>
    </div>
    <div class="set">
      <button><svg width="30" height="30" viewBox="0 0 30 30"><path d="M0 1h28v5H0zM0 11h28v5H0zM0 21h16v5H0zM20 19l9 5.500-9 5.500z"/></svg></button>
      <button><svg width="30" height="32" viewBox="0 0 30 32"><path d="M20 0l9 6-9 6V8H5v7H1V8q0-4 4-4h15zM10 32l-9-6 9-6v4h15v-7h4v7q0 4-4 4H10z"/></svg></button>
      <button><svg width="30" height="28" viewBox="0 0 30 28"><path d="M1 3l3-3 8 8-3 4zM1 24L22 3l-3-3h9v10l-4-3L4 28zM17 17l3-3 4 5 4-2v11H18l3-3z"/></svg></button>
    </div>
    <div class="vol">
      <svg width="28" height="30" viewBox="0 0 28 30"><path d="M1 9h4l6-8v28l-6-7H1z" fill="#737373"/><path d="M14 10q4 5 0 9M18 6q6 9 0 17M22 1q8 14 0 28" fill="none" stroke="#fd930e" stroke-width="2.600"/></svg>
      <div class="ramp"><span>125%</span><svg width="148" height="46" viewBox="0 0 148 46"><path d="M3 37L143 3q3-1 3 2v36q0 3-3 3H5q-4-3-2-7z" fill="url(#gVol)" stroke="#737373" stroke-width="3.500"/></svg></div>
    </div>
  </div>
</section>

<footer class="tb11">
  <div class="wx11"><svg width="44" height="42"><use href="#weather"/></svg><em class="badge red">1</em></div>
  <div class="app11"><svg width="46" height="46"><use href="#win11"/></svg></div>
  <div class="search11"><svg width="32" height="32"><use href="#lens"/></svg><span>Search</span></div>
  <div class="app11"><svg width="48" height="44"><use href="#tview"/></svg></div>
  <div class="app11"><svg width="47" height="47"><use href="#chat"/></svg><em class="badge">1</em></div>
  <div class="app11 dot"><svg width="48" height="48"><use href="#edge"/></svg></div>
  <div class="app11 dot"><svg width="48" height="42"><use href="#folder"/></svg></div>
  <div class="app11 dot"><svg width="46" height="48"><use href="#store"/></svg><em class="badge">1</em></div>
  <div class="app11 dot"><svg width="50" height="50" viewBox="0 0 50 50"><circle cx="25" cy="25" r="23.500" fill="none" stroke="#000" stroke-width="2.400"/><text x="25" y="30.500" font-size="15" font-weight="700" text-anchor="middle" textLength="36">DELL</text></svg></div>
  <div class="app11 dot"><svg width="48" height="48"><use href="#chrome"/></svg></div>
  <div class="app11 dot"><svg width="48" height="48"><use href="#gear"/></svg></div>
  <div class="app11 dot"><svg width="36" height="48"><use href="#notes11"/></svg></div>
  <div class="app11 dot"><svg width="48" height="48"><use href="#vscode"/></svg></div>
  <div class="app11 dot"><svg width="48" height="48"><use href="#word"/></svg></div>
  <div class="app11 dot"><svg width="44" height="42"><use href="#acrobat"/></svg></div>
  <div class="app11 dot active"><svg width="48" height="48"><use href="#cone"/></svg></div>
  <div class="app11 dot"><svg width="48" height="48"><use href="#putty"/></svg></div>
  <div class="app11 dot"><svg width="46" height="48"><use href="#paint11"/></svg></div>
  <div class="tray11">
    <svg class="t1" width="24" height="14"><use href="#chevUp"/></svg>
    <svg class="t2" width="34" height="24" viewBox="0 0 34 24"><path d="M8 22A7 7 0 0 1 5 9Q8 7 10 6.500 17-3 24 5.500 27 6 30 10 34 20 26 22z" fill="#7d7d7d"/><path d="M5 9q8-3 13 2L6 20Q-1 15 5 9z" fill="#a8a8a8"/><path d="M4 19l15-8 11 8q-1 3-4 3H8q-3 0-4-3z" fill="#e6e6e6"/><path d="M8 22.500A7 7 0 0 1 4 9.500Q7 7 10 6.500 17-3 24 5.500 28 6 31 11 34 20 26 22.500z" fill="none" stroke="#000" stroke-width="2"/></svg>
    <svg class="t3" width="36" height="42" viewBox="0 0 36 42"><path d="M2 22C2 0 22-2 29 11M30 1v11H19M5 40V29h11M5 30q3 7 11 9" fill="none" stroke="#000" stroke-width="2.200"/><circle cx="25" cy="31" r="9" fill="#fb9a06"/></svg>
    <div class="lang"><span>ENG</span><span>IN</span></div>
    <svg class="t4" width="32" height="28" viewBox="0 0 32 28"><path d="M1 11q15-19 30 0" fill="none" stroke="#a4bfc1" stroke-width="2.200"/><path d="M5 16q11-14 22 0M10 21q6-8 12 0" fill="none" stroke="#111" stroke-width="2.200"/><circle cx="16" cy="25" r="2.800"/></svg>
    <svg class="t5" width="34" height="32"><use href="#volume"/></svg>
    <svg class="t6" width="34" height="30" viewBox="0 0 34 30"><path d="M9 6h15q4 0 4 5v12q0 4-4 4H5q-4 0-4-4v-6" fill="none" stroke="#111" stroke-width="2"/><path d="M11 10h14v14H4v-4z"/><path d="M28 13h2q2 1 2 4t-2 3h-2z"/><path d="M7 0L0 11h4l-2 6 8-9H6z"/></svg>
    <div class="clock11"><span>16:16</span><span>13-01-2024</span></div>
    <svg class="t7" width="26" height="32" viewBox="0 0 26 32"><path d="M13 0q10 0 10 11v7l3 5q0 2-2 2H2q-2 0-2-2l3-5v-7Q3 0 13 0zM8 28h10q-1 4-5 4t-5-4z" fill="#003e92"/></svg>
  </div>
</footer>
</body>
</html>
```
FILE: styles.css
```css
* { box-sizing: border-box; }
body { margin: 0; width: 2880px; height: 1920px; overflow: hidden; display: flex; flex-direction: column; background: #000; color: #000; font-family: "Open Sans", "Noto Sans", sans-serif; font-size: 22.5px; font-stretch: 92%; }
svg { display: block; flex: none; overflow: visible; }
.defs { position: absolute; }
i, em { font-style: normal; }

/* VLC window chrome */
.titlebar { height: 45px; flex: none; display: flex; align-items: center; background: linear-gradient(90deg, #f0f5df 0, #f1f5db 50%, #fbf4db 65%, #f7f2e2 72%, #edf3ec 80%, #e9f4f8 92%, #eaf3fa 100%); }
.cone-sm { width: 28px; height: 33px; margin: 0 6px 0 4px; }
.window-title { padding-top: 2px; letter-spacing: .15px; }
.caption { margin-left: auto; display: flex; align-items: center; gap: 71px; padding-right: 38px; }
.menubar { height: 42px; flex: none; display: flex; align-items: center; background: #fff; gap: 34px; padding: 0 0 1px 16px; font-size: 22.3px; letter-spacing: .05px; }
.menubar u { text-underline-offset: 3px; text-decoration-thickness: 2px; }

/* Video picture */
.stage { height: 1634px; flex: none; display: flex; background: #000; }
.shared { width: 2511px; padding-top: 109px; display: flex; flex-direction: column; align-items: flex-start; }
.paint { width: 2511px; height: 1416px; display: flex; flex-direction: column; background: #fff; color: #444; }
.p-title { height: 46px; display: flex; align-items: center; }
.p-logo { width: 33px; height: 30px; margin: -2px 0 0 -2px; }
.vr { width: 1.500px; height: 28px; background: #b8b8b8; margin-left: 8px; }
.p-save { width: 22px; height: 22px; margin-left: 26px; }
.p-undo { width: 26px; height: 29px; margin-left: 18px; }
.p-redo { width: 26px; height: 29px; margin-left: 15px; }
.p-drop { width: 12px; height: 12px; margin: 8px 0 0 16px; }
.vr2 { margin-left: 21px; }
.p-name { margin-left: 9px; font-size: 22.2px; color: #333; padding-top: 2px; }
.p-caption { margin-left: auto; display: flex; gap: 71px; align-items: center; padding-right: 37px; }
.p-tabs { height: 44px; display: flex; align-items: center; font-size: 20.5px; }
.tab { height: 44px; line-height: 44px; text-align: center; }
.file { width: 110px; background: #1272cf; color: #e7f1fc; }
.home { width: 107px; background: #f5f6f7; border: 1px solid #e3e4e6; border-bottom: 0; }
.view { width: 100px; }
.p-collapse { width: 22px; height: 13px; margin-left: auto; }
.help { width: 29px; height: 29px; margin: 0 6px 0 17px; border-radius: 50%; background: #0f66cc; border: 1px solid #555; color: #fff; font-size: 22px; font-weight: 400; line-height: 27px; text-align: center; }
.ribbon { height: 182px; display: flex; background: #f5f6f8; border-top: 2px solid #e8eaec; padding-top: 5px; font-size: 20.500px; letter-spacing: -.2px; }
.group { height: 171px; border-right: 1.500px solid #e2e4e7; display: flex; flex-direction: column; flex: none; }
.gbody { height: 141px; display: flex; align-items: flex-start; padding-top: 3px; }
.glabel { text-align: center; line-height: 28px; color: #666; }
.g-clip { width: 202px; } .g-image { width: 223px; } .g-tools { width: 153px; } .g-brush { width: 100.500px; }
.g-shapes { width: 463px; } .g-size { width: 100px; } .g-colors { width: 695px; } .g-3d { width: 107px; }
.big { width: 101px; display: flex; flex-direction: column; align-items: center; line-height: 27px; }
.pic { height: 73px; display: flex; align-items: center; }
.caret { width: 10px; height: 6px; margin-top: 9px; color: #111; }
.rows > div { height: 42px; display: flex; align-items: center; gap: 7px; }
.rows .caret { margin: -6px 0 0 2px; }
.off, .off .caret { color: #9b9b9b; }
.g-clip .big { width: 102px; }
.g-clip .rows > div { gap: 9px; }
.g-image .big { width: 95px; }
.g-clip .glabel { padding-right: 3px; }
.g-image .glabel { padding-right: 7px; }
.toolgrid { display: grid; grid-template-columns: repeat(3, 44px); grid-template-rows: 57px 57px; place-items: center; padding: 11px 0 0 8px; }
.g-tools .glabel { padding-right: 6px; }
.serifA { font: 700 40px/40px "Liberation Serif", serif; color: #1d3a63; }
.g-brush .big { width: 94px; }
.g-shapes .gbody { padding-left: 9px; }
.gallery { margin-top: 5px; }
.r-fill { margin-left: 11px; }
.r-fill > div { gap: 5px; letter-spacing: -.4px; }
.g-shapes .glabel { padding-right: 6px; }
.g-size .big { width: 94px; }
.g-colors .gbody { padding-left: 7px; }
.sel { width: 82px; height: 130px; background: #c8dff6; border: 1.500px solid #92bfe8; margin-right: 8px; }
.sel .pic { height: 72px; }
.sw1 { width: 62px; height: 62px; background: #000; border: 2px solid #8c8c8c; box-shadow: inset 0 0 0 2px #f2f2f2; }
.c2 { width: 62px; }
.sw2 { width: 47px; height: 48px; background: #fff; border: 2px solid #a0a0a0; }
.swatches { display: grid; grid-template-columns: repeat(10, 40.500px); grid-auto-rows: 40.500px; gap: 2.700px; margin: 1px 0 0 12px; }
.swatches i { border: 1.500px solid #a9abae; box-shadow: inset 0 0 0 2px #f5f6f8; }
.ec { width: 80px; }
.g-colors .glabel { padding-right: 6px; }

.workspace { height: 980px; display: flex; background: #c9d0e2; }
.canvas-wrap { width: 2478px; padding: 7px 0 0 6px; background: linear-gradient(#c9d0e2, #dfe6f2); }
.canvas { background: #fff; }
.ink text { font-size: 24.500px; fill: #111; font-stretch: 96%; }
.ink.green text { fill: #2aa955; }
.vscroll { width: 33px; background: #f0f0f0; padding: 0 2px 0 1px; display: flex; flex-direction: column; align-items: center; }
.vscroll svg { width: 17px; height: 14px; margin: 13px 0 7px; }
.vscroll i { width: 30px; height: 842px; background: #cbcbcb; }
.vscroll .end { margin: 79px 0 0; }
.hscroll { height: 32px; display: flex; align-items: center; background: #f0f0f0; }
.hscroll svg { width: 13px; height: 17px; margin: 0 11px 0 10px; }
.hscroll i { width: 2370px; height: 31px; background: #bfbfbf; }
.hscroll .right { margin-left: 49px; }
.status { height: 52px; display: flex; background: #f0f0f0; border-top: 2px solid #e6e6e6; font-size: 23px; }
.cell { width: 320.500px; flex: none; border-right: 1.500px solid #dcdcdc; display: flex; align-items: center; gap: 6px; padding-left: 6px; padding-bottom: 2px; }
.c1 { padding-left: 5px; gap: 10px; }
.wide { width: 845px; }
.cell.zoom { flex: 1; border: 0; padding-left: 34px; gap: 6px; }
.zoom span { width: 58px; letter-spacing: -.2px; }

.tb10 { height: 80px; display: flex; align-items: center; background: linear-gradient(90deg, #20343f, #20323f 40%, #1c2c40 62%, #192946 85%, #16284a); color: #e4e9ee; }
.start { width: 95px; flex: none; display: flex; justify-content: center; }
.search10 { width: 564px; flex: none; height: 80px; background: #f3f3f3; border: solid #c4c4c4; border-width: 2px 1px 4px; display: flex; align-items: center; color: #3c3c3c; font-size: 28px; padding: 0 7px 0 21px; }
.search10 span { margin-left: 23px; }
.search10 svg { margin-top: -2px; }
.hl { margin-left: auto; width: 141px; height: 62px; border-radius: 10px; background: #e5e5e5; display: flex; align-items: center; justify-content: center; }
.tv { width: 100px; flex: none; padding-left: 30px; }
.app { width: 88.600px; flex: none; height: 80px; display: flex; align-items: center; justify-content: center; position: relative; padding-bottom: 3px; }
.run::after { content: ""; position: absolute; left: 9px; right: 9px; bottom: 0; height: 6px; background: #76b9ed; }
.multi::after { background: linear-gradient(90deg, #76b9ed 76%, #5a8db8 76%); }
.on { background: #4a5766; }
.on::after { left: 0; right: 0; }
.badgeP { margin-top: 4px; }
.wx { margin-left: 48px; flex: none; display: flex; align-items: center; gap: 14px; width: 170px; font-size: 24.500px; letter-spacing: -.2px; }
.wx svg { margin-top: -8px; }
.tray10 { display: flex; flex: none; align-items: center; justify-content: space-between; width: 311px; }
.clock10 { width: 122px; flex: none; margin-left: 14px; display: flex; flex-direction: column; text-align: center; line-height: 36px; font-size: 23px; letter-spacing: -.2px; padding-bottom: 1px; }
.notif { margin-left: 31px; }
.peek { width: 1.500px; height: 80px; background: #6b7688; margin-left: auto; margin-right: 8px; }

.tag { height: 39px; line-height: 35px; padding: 0 9px 0 8px; border-radius: 7px; background: rgba(0,0,0,.5); color: #fff; font-size: 23.800px; white-space: nowrap; }
.speaking { background: #6264a7; width: 117px; color: #eef0ff; padding-left: 8px; line-height: 37px; }
.presenter { margin: 57px 0 0 12px; }
.people { margin-left: 29px; padding-top: 103px; display: grid; grid-template-columns: 165px 165px; grid-auto-rows: 165px; height: 1600px; }
.p { display: flex; flex-direction: column; align-items: flex-start; }
.p b { width: 105px; height: 105px; border-radius: 50%; margin-left: 19px; font-size: 40px; font-weight: 600; line-height: 104px; text-align: center; }
.p .tag { margin-top: -15px; position: relative; }
.p .speaking { margin-left: 1px; line-height: 36px; }
.more b { background: #454878; color: #fff; font-size: 26px; }

/* VLC controls */
.controls { height: 104px; flex: none; background: #f0f0f0; padding-top: 8px; }
.seek { height: 20px; display: flex; align-items: center; font-size: 22.500px; }
.seek time { width: 110px; padding: 0 0 0 18px; letter-spacing: -.4px; }
.track { width: 2631px; margin-left: 18px; height: 20px; border-radius: 6px; background: linear-gradient(#b9b9b9, #d2d2d2); padding-top: 2px; }
.track i { display: block; width: 2220px; height: 16px; border-radius: 6px; background: linear-gradient(#3089dd, #2478c8); }
.seek .total { padding-left: 31px; white-space: nowrap; }
.buttons { display: flex; align-items: center; padding: 10px 11px 0 8px; height: 75px; }
button { width: 49px; flex: none; height: 50px; padding: 0; border: 1.500px solid #d0d0d0; border-bottom-color: #b9b9b9; border-radius: 5px; background: #fdfdfd; display: flex; align-items: center; justify-content: center; fill: #6e6e6e; }
.play { width: 60px; height: 62px; }
.set { display: flex; gap: 3.600px; margin-left: 26.500px; }
.play + .set { margin-left: 27px; }
.vol { margin-left: auto; display: flex; align-items: flex-end; gap: 13px; }
.ramp { position: relative; }
.ramp span { position: absolute; left: 6px; top: 0; font-size: 19px; color: #777; letter-spacing: -.4px; }

/* Windows 11 taskbar */
.tb11 { flex: 1; display: flex; align-items: center; padding-bottom: 3px; border-top: 2px solid rgba(110,110,110,.45); background: linear-gradient(90deg, #ecee8f 0, #e9ee92 100px, #e8f08e 330px, #eedcc6 470px, #efe2c8 540px, #dce8b2 720px, #ebe9a0 880px, #ebe798 970px, #f0e0ca 1060px, #f3ddd2 1250px, #ebe0e2 1340px, #eadcda 1500px, #dfe2e6 1600px, #c9ebec 1760px, #c2edeb 2100px, #c8eeee 2500px, #cce8f0 2880px); }
.wx11, .app11 { position: relative; flex: none; }
.wx11 { width: 330px; padding-left: 19px; }
.app11 { width: 88px; height: 93px; display: flex; align-items: center; justify-content: center; }
.badge { position: absolute; right: 10px; top: 12px; width: 32px; height: 32px; border-radius: 50%; background: #0677d2; color: #fff; font-size: 20px; line-height: 31px; text-align: center; }
.red { background: #c42b1c; left: 42px; right: auto; top: -13px; }
.search11 { width: 436px; flex: none; height: 62px; margin: 0 6px 0 7px; border-radius: 31px; background: rgba(255,253,246,.78); border: 2px solid rgba(160,140,110,.25); display: flex; align-items: center; padding-left: 19px; gap: 18px; font-size: 26px; color: #5c5c5c; }
.search11 svg { color: #222; }
.dot::before { content: ""; position: absolute; left: 39px; bottom: 8px; width: 11px; height: 6px; border-radius: 3px; background: #7f7f7f; }
.active { background: rgba(255,255,255,.6); box-shadow: inset 0 0 0 1px rgba(0,0,0,.05); width: 76px; height: 77px; margin: 0 6px; border-radius: 8px; }
.active::before { width: 32px; left: 22px; bottom: 0; background: #0078d4; }
.tray11 { flex: 1; display: flex; align-items: center; color: #111; font-size: 22.500px; }
.t1 { margin-left: 45px; } .t2 { margin-left: 36px; } .t3 { margin-left: 29px; }
.lang { width: 60px; margin-left: 28px; display: flex; flex-direction: column; text-align: center; line-height: 32px; }
.t4 { margin-left: 30px; } .t5 { margin-left: 15px; } .t6 { margin-left: 14px; }
.clock11 { width: 155px; flex: none; display: flex; flex-direction: column; text-align: right; line-height: 32px; white-space: nowrap; font-size: 24px; }
.t7 { margin-left: 19px; }
```
